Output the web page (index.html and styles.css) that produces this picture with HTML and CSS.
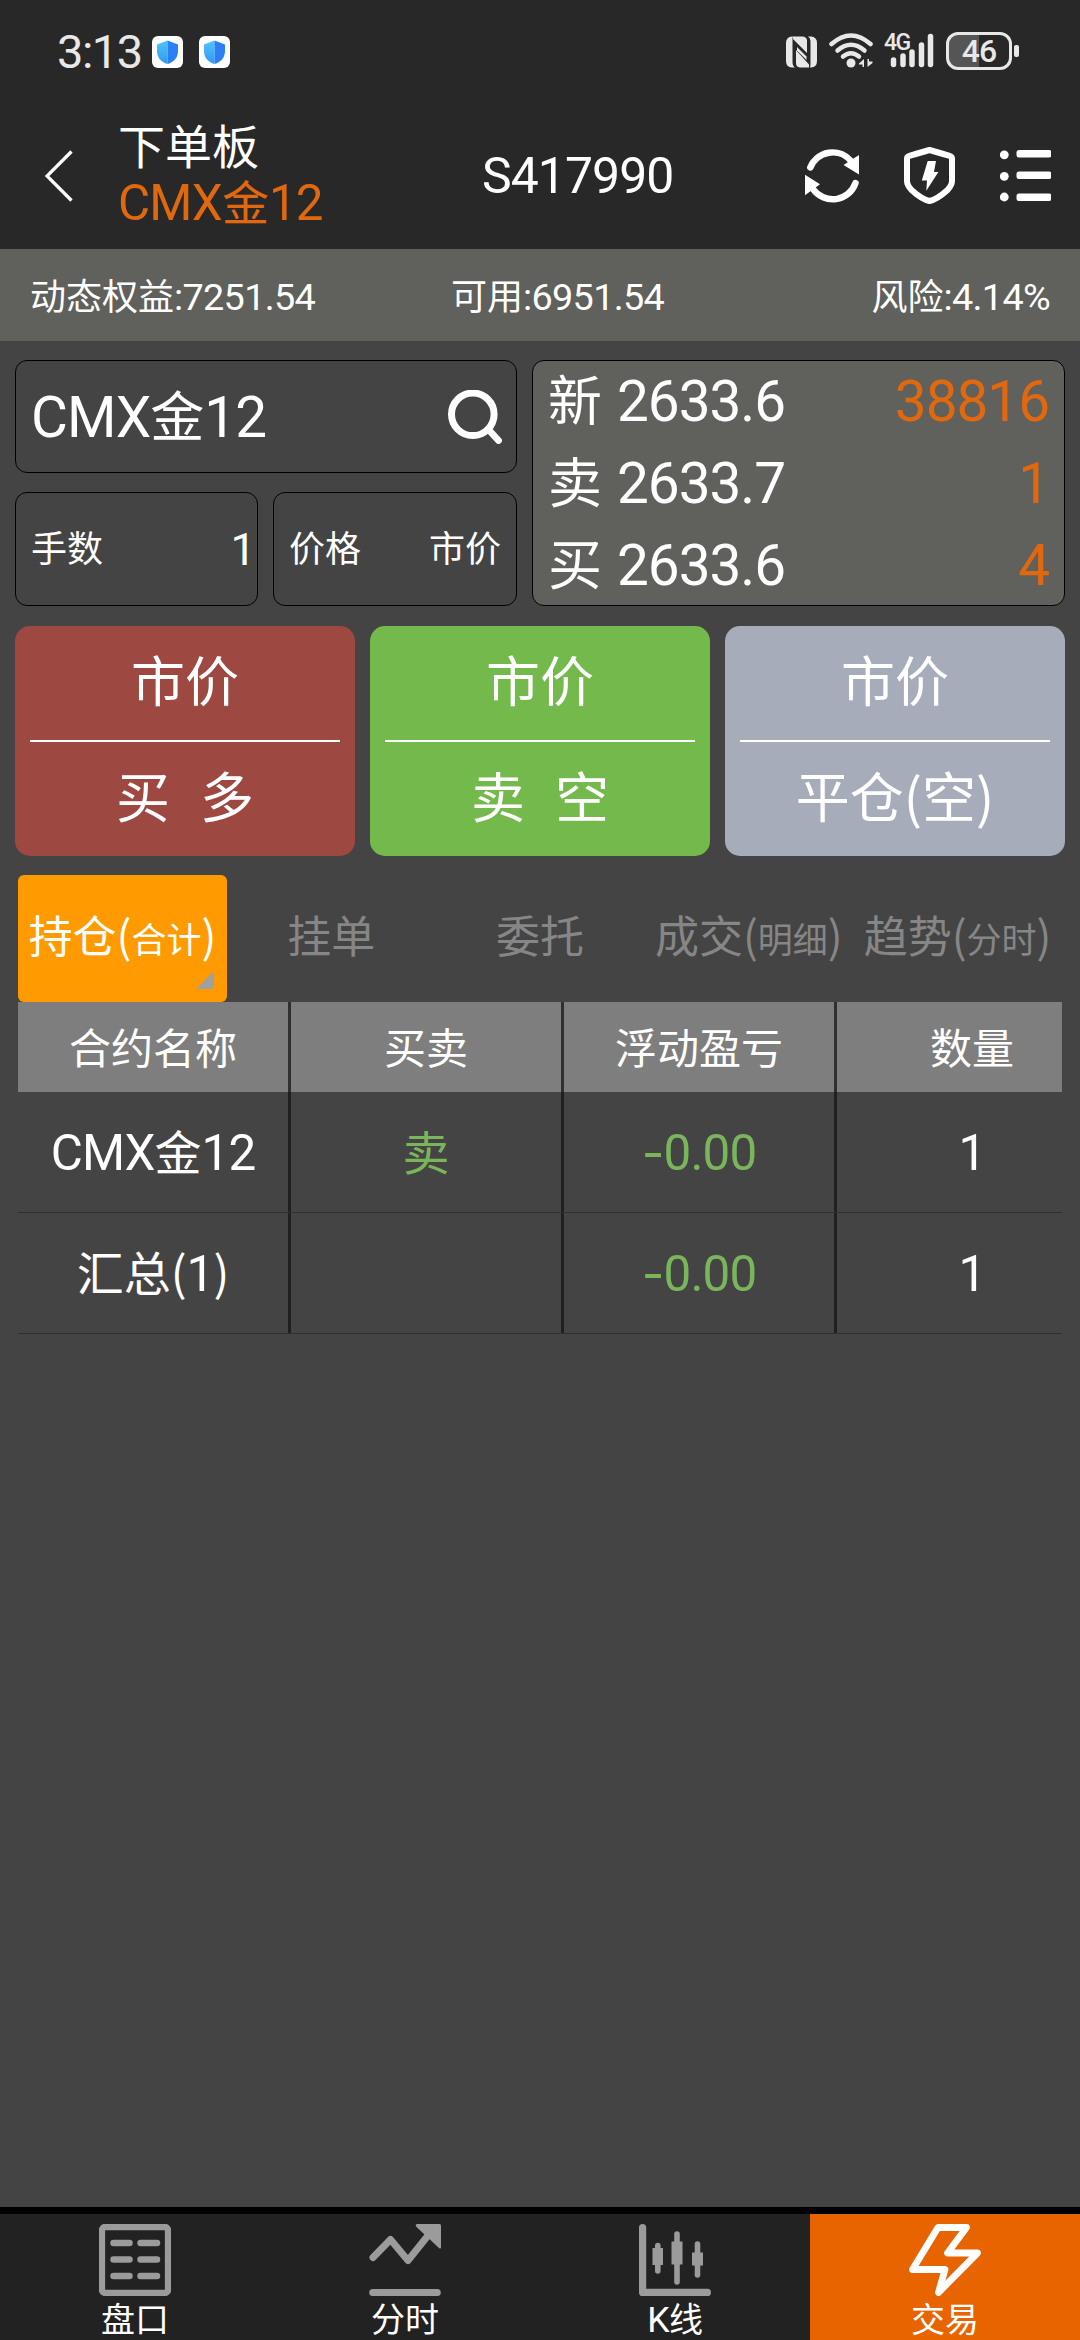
FILE: index.html
```html
<!DOCTYPE html>
<html lang="zh-CN">
<head>
<meta charset="utf-8">
<title>下单板</title>
<link rel="stylesheet" href="styles.css">
</head>
<body>
<div class="app">
  <div class="status">
    <span class="time">3:13</span>
    <svg class="guard" viewBox="0 0 31 32"><defs><linearGradient id="g" x1="0" y1="0" x2="0" y2="1"><stop offset="0" stop-color="#52c5f8"/><stop offset="1" stop-color="#2d98f4"/></linearGradient></defs><rect width="31" height="32" rx="6" fill="#fff"/><path d="M15.5 4.500L5 8.500V15C5 21.500 9 26 15.500 28Z" fill="url(#g)"/><path d="M15.500 4.500L26 8.500V15C26 21.500 22 26 15.500 28Z" fill="#2b80f5"/></svg>
    <svg class="guard" viewBox="0 0 31 32"><rect width="31" height="32" rx="6" fill="#fff"/><path d="M15.5 4.500L5 8.500V15C5 21.500 9 26 15.500 28Z" fill="url(#g)"/><path d="M15.500 4.500L26 8.500V15C26 21.500 22 26 15.500 28Z" fill="#2b80f5"/></svg>
    <span class="grow"></span>
    <svg class="nfc" viewBox="0 0 31 32"><path d="M7 0.500H17Q20.500 1 21 4V17L7 3ZM6 0.500Q0 1 0 7V25Q0 31 6 31.500H9Q6.500 30 6.500 26V3Q6.500 1 7 0.500ZM22 0.500H25Q31 1 31 7V25Q31 31 25 31.500H24Q24.500 30 24.500 28V5Q24.500 2 22 0.500ZM10 14L23 28.500V31.500H14Q10 31 10 27Z" fill="#e8e8e8"/><path d="M11 11L20.500 20.500V24L11 14.500Z" fill="#e8e8e8"/></svg>
    <svg class="wifi" viewBox="0 0 44 35"><g fill="none" stroke="#e8e8e8" stroke-width="4.500" stroke-linecap="round"><path d="M2.500 11Q22 -6 41.500 11"/><path d="M8.500 17.500Q22 6 35.500 17.500"/><path d="M14 23.500Q22 17 30 23.500"/></g><circle cx="22" cy="30" r="4.500" fill="#e8e8e8"/><path d="M30 30.500L35 26V34H33.500V31.500H30ZM38.500 26V34L43.500 30V28.500H40V26Z" fill="#e8e8e8"/></svg>
    <div class="cell">
      <svg viewBox="0 0 50 35"><g stroke="#e8e8e8" stroke-width="5.500" stroke-linecap="round"><path d="M9.500 27V31.500M19 23V31.500M28 19V31.500M37.500 12V31.500M46.500 3.500V31.500"/></g></svg>
      <span class="net">4G</span>
    </div>
    <div class="battery"><span>46</span></div>
    <i class="nub"></i>
  </div>
  <div class="header">
    <svg class="back" viewBox="0 0 28 52"><path d="M26.500 1.500L2 26L26.500 50.500" fill="none" stroke="#fff" stroke-width="3.300"/></svg>
    <div class="titles"><div>下单板</div><div class="orange"><b>CMX</b>金<b>12</b></div></div>
    <div class="account"><b>S417990</b></div>
    <svg class="refresh" viewBox="0 0 54 54"><g fill="none" stroke="#fff" stroke-width="6.500" stroke-linecap="round"><path d="M5.300 18.500A24 24 0 0 1 46 12"/><path d="M50.500 34A24 24 0 0 1 8 40"/></g><path d="M54 6V25.500L38.500 16ZM0 25.700V46.300L15 35.300Z" fill="#fff"/></svg>
    <svg class="shield" viewBox="0 0 51 57"><path d="M25.500 3L41 7.500Q48 9 48 11V34Q48 38 43.500 43Q33 52.500 25.500 54Q18 52.500 7.500 43Q3 38 3 34V11Q3 9 10 7.500Z" fill="none" stroke="#fff" stroke-width="6" stroke-linejoin="round"/><path d="M23.700 14H32L30 25H34.400L22.300 43.700L23 33.500H17.800Z" fill="#fff"/></svg>
    <svg class="menu" viewBox="0 0 51 52"><g fill="#fff"><circle cx="4.300" cy="4.800" r="4.400"/><circle cx="4.300" cy="26.300" r="4.400"/><circle cx="4.300" cy="47" r="4.400"/><rect x="16.500" y="0" width="35" height="7.500" rx="2.500"/><rect x="16.500" y="21.500" width="35" height="7.500" rx="2.500"/><rect x="16.500" y="43.500" width="35" height="7.500" rx="2.500"/></g></svg>
  </div>
  <div class="funds"><span>动态权益<b>:7251.54</b></span><span>可用<b>:6951.54</b></span><span>风险<b>:4.14%</b></span></div>
  <div class="order">
    <div class="inputs">
      <div class="box search"><span><b>CMX</b>金<b>12</b></span>
        <svg viewBox="0 0 54 54"><circle cx="24.800" cy="24.300" r="21.300" fill="none" stroke="#fff" stroke-width="7"/><path d="M40 39L50.500 50.500" stroke="#fff" stroke-width="6.800" stroke-linecap="round"/></svg></div>
      <div class="box qty"><span>手数</span><span class="num"><b>1</b></span></div>
      <div class="box price"><span>价格</span><span>市价</span></div>
    </div>
    <div class="box quotes">
      <div><i>新</i><span><b>2633.6</b></span><em><b>38816</b></em></div>
      <div><i>卖</i><span><b>2633.7</b></span><em><b>1</b></em></div>
      <div><i>买</i><span><b>2633.6</b></span><em><b>4</b></em></div>
    </div>
  </div>
  <div class="actions">
    <div class="act buy"><span>市价</span><hr><span class="pair"><i>买</i><i>多</i></span></div>
    <div class="act sell"><span>市价</span><hr><span class="pair"><i>卖</i><i>空</i></span></div>
    <div class="act close"><span>市价</span><hr><span>平仓(空)</span></div>
  </div>
  <div class="tabs">
    <div class="tab on"><span>持仓(<small>合计</small>)</span><svg class="corner" viewBox="0 0 18 18"><path d="M18 0V14Q18 18 14 18H0Z" fill="#a0a0a0"/></svg></div>
    <div class="tab"><span>挂单</span></div>
    <div class="tab"><span>委托</span></div>
    <div class="tab"><span>成交(<small>明细</small>)</span></div>
    <div class="tab"><span>趋势(<small>分时</small>)</span></div>
  </div>
  <div class="table">
    <div class="row head"><span>合约名称</span><span>买卖</span><span>浮动盈亏</span><span>数量</span></div>
    <div class="row"><span><b>CMX</b>金<b>12</b></span><span class="green">卖</span><span class="green"><b><i class="sign">-</i>0.00</b></span><span><b>1</b></span></div>
    <div class="row"><span>汇总(<b>1</b>)</span><span></span><span class="green"><b><i class="sign">-</i>0.00</b></span><span><b>1</b></span></div>
  </div>
  <div class="nav">
    <div><svg viewBox="0 0 72 72"><rect x="3" y="3" width="66" height="66" rx="3" fill="none" stroke="#9b9b9b" stroke-width="6.300"/><path d="M14.500 19H30.500M41.500 19H58M14.500 35.500H30.500M41.500 35.500H58M14.500 52H30.500M41.500 52H58" stroke="#9b9b9b" stroke-width="6.500" stroke-linecap="round"/></svg><span>盘口</span></div>
    <div><svg viewBox="0 0 72 72"><path d="M4 33.500L21.500 15.500L39 36.500L61 9M3.700 68.500H68.300" fill="none" stroke="#9b9b9b" stroke-width="7" stroke-linecap="round" stroke-linejoin="round"/><path d="M48.500 0H70.500Q72 0 72 1.500V23Q72 25.500 70 24L47.500 3Q45.500 0 48.500 0Z" fill="#9b9b9b"/></svg><span>分时</span></div>
    <div><svg viewBox="0 0 72 72"><g fill="none" stroke="#9b9b9b" stroke-linecap="round"><path d="M3.600 3.600V68.400H68.400" stroke-width="7.200" stroke-linejoin="round"/><path d="M18.800 21.500V47M38 10V58M58.500 20V51" stroke-width="5.600"/></g><path d="M13.500 24H24V41H13.500ZM32.500 17.500H43.500V40.500H32.500ZM53 28.500H64V41.500H53Z" fill="#9b9b9b"/></svg><span><b>K</b>线</span></div>
    <div class="on"><svg viewBox="0 0 72 72"><path d="M29 3.500H57.500L38.500 29H68.500L29.500 68.500L36 45.500H3.500Z" fill="none" stroke="#fff" stroke-width="6.800" stroke-linejoin="round"/></svg><span>交易</span></div>
  </div>
</div>
</body>
</html>
```
FILE: styles.css
```css
* { box-sizing: border-box; }
body { margin: 0; background: #444; }
i, em { font-style: normal; }
svg { display: block; flex: none; }
.app {
  width: 1080px; height: 2340px; display: flex; flex-direction: column;
  background: #444; color: #fff; white-space: nowrap; overflow: hidden;
  font-family: "Noto Sans CJK SC", sans-serif;
}
b { font-family: Roboto, sans-serif; font-weight: 400; font-size: 1.05em; line-height: 0; letter-spacing: -0.018em; }
.grow { flex: 1; }

.status { height: 104px; flex: none; background: #282828; display: flex; align-items: center; padding: 0 61px 0 57px; color: #e8e8e8; }
.time { font-family: Roboto, sans-serif; font-size: 47px; line-height: 104px; width: 95px; letter-spacing: -1.5px; }
.guard { width: 31px; height: 32px; margin-right: 16px; }
.nfc { width: 31px; height: 32px; margin-right: 12px; }
.wifi { width: 44px; height: 35px; margin: -3px 11px 0 0; }
.cell { position: relative; margin: -3px 12px 0 0; }
.cell svg { width: 50px; height: 35px; }
.net { position: absolute; left: 0; top: -2px; font-family: Roboto, sans-serif; font-size: 23px; line-height: 24px; font-weight: 500; letter-spacing: -1.5px; }
.battery {
  width: 66px; height: 38px; border: 3px solid #e8e8e8; border-radius: 12px; margin-top: -3px;
  background: linear-gradient(90deg, #555 50%, #282828 50%);
  display: flex; justify-content: center; font-family: Roboto, sans-serif; font-size: 32px; line-height: 32px; font-weight: 500; letter-spacing: -1px;
}
.nub { width: 5px; height: 12px; background: #e8e8e8; border-radius: 2px; margin: -3px 0 0 2px; }

.header { height: 145px; flex: none; background: #282828; display: flex; align-items: center; padding: 0 29px 2px 45px; }
.back { width: 28px; height: 52px; }
.titles { width: 365px; padding-left: 45px; font-size: 47px; line-height: 56px; margin-top: -8px; }
.orange { color: #e0680f; }
.account { flex: 1; font-size: 47.5px; line-height: 60px; margin-left: 44px; margin-top: -6px; }
.refresh { width: 54px; height: 54px; margin-right: 45px; }
.shield { width: 51px; height: 57px; margin-right: 45px; }
.menu { width: 51px; height: 52px; }

.funds { height: 92px; flex: none; background: #60605d; display: grid; grid-template-columns: 421px 1fr auto; padding: 0 30px; font-size: 36px; line-height: 90px; }

.order { display: grid; grid-template-columns: 502px 533px; gap: 15px; padding: 19px 15px 0; }
.box { border: 1px solid #000; border-radius: 12px; }
.inputs { display: grid; grid-template: 113px 114px / 243px 244px; gap: 19px 15px; }
.inputs .box { display: flex; justify-content: space-between; align-items: center; padding: 0 15px; font-size: 36px; line-height: 50px; }
.inputs .box > span { margin-top: -6px; }
.inputs .search { grid-column: span 2; font-size: 54px; padding-right: 14px; }
.search svg { width: 54px; height: 54px; }
.inputs .qty { padding-right: 2px; }
.num { font-size: 43px; }
.quotes { background: #60605d; height: 246px; padding: 0 15px; font-size: 54px; }
.quotes div { display: flex; height: 82px; line-height: 74px; }
.quotes i { width: 69px; }
.quotes em { margin-left: auto; color: #e0680f; }

.actions { display: grid; grid-template-columns: repeat(3, 340px); gap: 15px; padding: 20px 15px 0; }
.act { height: 230px; border-radius: 15px; padding: 0 15px; text-align: center; font-size: 54px; line-height: 106px; }
.act > span { display: block; height: 114px; }
.act hr { margin: 0; height: 2px; border: 0; background: #fff; }
.pair { display: flex !important; justify-content: center; gap: 30px; }
.buy { background: #9d4841; }
.sell { background: #74b94c; }
.close { background: #a7acbb; }

.tabs { display: grid; grid-template-columns: repeat(5, 1fr); padding: 19px 18px 0; }
.tab { height: 127px; position: relative; text-align: center; font-size: 44px; line-height: 118px; color: #868686; }
.tab small { font-size: 35px; }
.tab.on { background: #ff9a00; color: #fff; border-radius: 6px; }
.corner { position: absolute; right: 13px; bottom: 13px; width: 18px; height: 18px; }

.table { margin: 0 18px; overflow: hidden; flex: 1; }
.row { display: grid; grid-template-columns: repeat(3, 273px) 270px; width: 1089px; height: 121px; border-bottom: 1px solid #303030; font-size: 47px; line-height: 116px; text-align: center; }
.row span { border-right: 3px solid #202020; }
.row.head { height: 90px; border: 0; background: #7e7e7e; font-size: 42px; line-height: 87px; }
.row.head span { border-color: #303030; }
.row span:last-child { border: 0; }
.row .green { color: #7ab55c; }
.sign { font-family: Inter, sans-serif; }

.nav { height: 133px; flex: none; border-top: 7px solid #000; background: #222; display: grid; grid-template-columns: repeat(4, 1fr); }
.nav div { display: flex; flex-direction: column; align-items: center; padding-top: 10px; }
.nav svg { width: 72px; height: 72px; }
.nav span { font-size: 34px; line-height: 40px; margin-top: 2px; }
.nav .on { background: #e86400; }
```
